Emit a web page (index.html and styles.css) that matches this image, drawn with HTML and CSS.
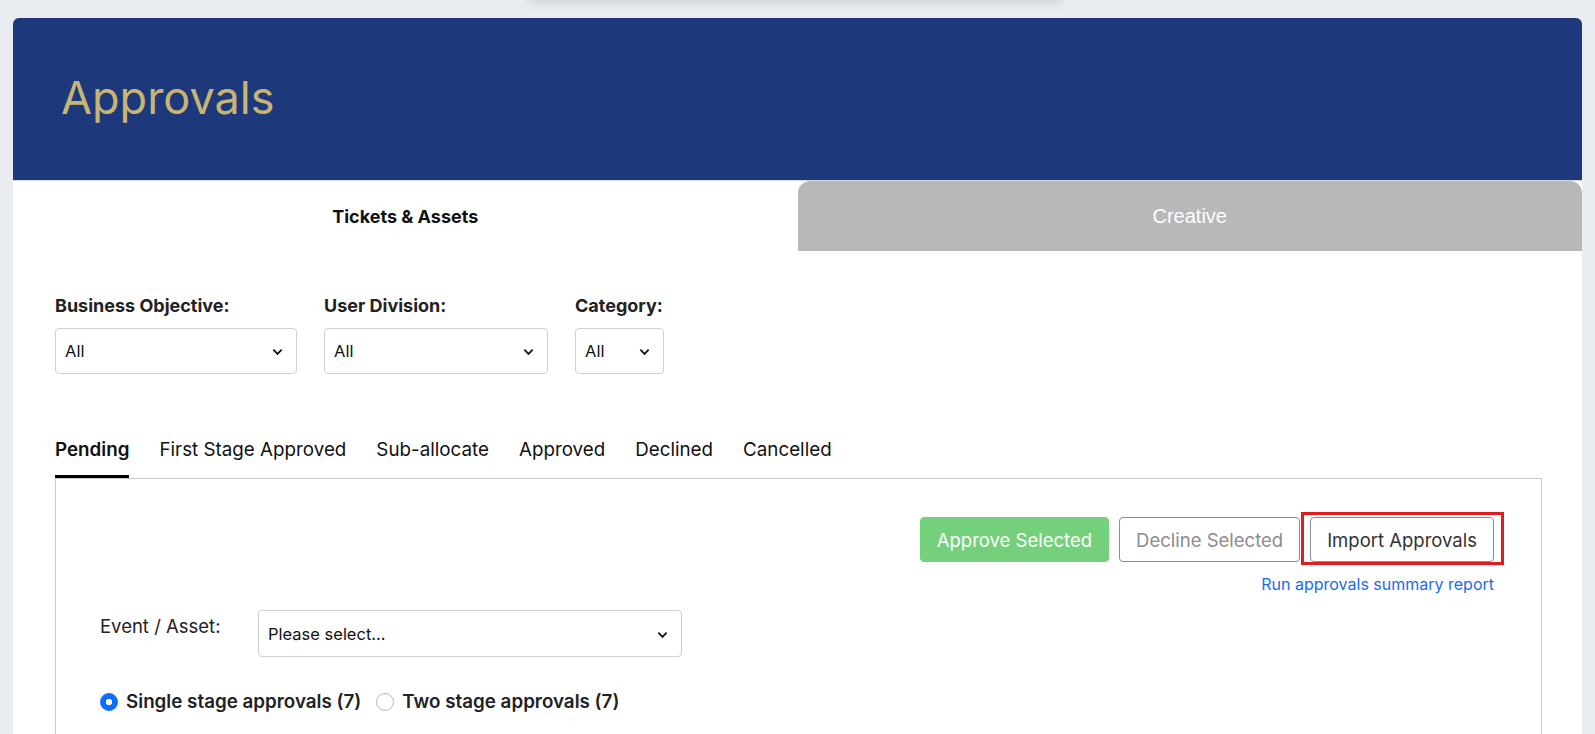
FILE: index.html
```html
<!DOCTYPE html>
<html lang="en">
<head>
    <meta charset="UTF-8">
    <meta name="viewport" content="width=device-width, initial-scale=1.0">
    <title>Approvals</title>
    <link rel="stylesheet" href="styles.css">
</head>
<body>
  <!-- floating bar just above the viewport, only its shadow shows -->
  <div class="top-shadow"></div>

  <div class="card">
    <header class="page-header">
      <h1>Approvals</h1>
    </header>

    <!-- Main tabs -->
    <nav class="main-tabs">
      <div class="main-tab active">Tickets &amp; Assets</div>
      <div class="main-tab">Creative</div>
    </nav>

    <div class="card-body">
      <!-- Filters -->
      <div class="filters">
        <div class="filter">
          <label>Business Objective:</label>
          <div class="select-wrap select-objective">
            <select><option>All</option></select>
            <svg class="chevron" viewBox="0 0 12 8"><path d="M1.5 1.5 6 6l4.5-4.5"/></svg>
          </div>
        </div>
        <div class="filter">
          <label>User Division:</label>
          <div class="select-wrap select-division">
            <select><option>All</option></select>
            <svg class="chevron" viewBox="0 0 12 8"><path d="M1.5 1.5 6 6l4.5-4.5"/></svg>
          </div>
        </div>
        <div class="filter">
          <label>Category:</label>
          <div class="select-wrap select-category">
            <select><option>All</option></select>
            <svg class="chevron" viewBox="0 0 12 8"><path d="M1.5 1.5 6 6l4.5-4.5"/></svg>
          </div>
        </div>
      </div>

      <!-- Status tabs -->
      <ul class="status-tabs">
        <li class="active">Pending</li>
        <li>First Stage Approved</li>
        <li>Sub-allocate</li>
        <li>Approved</li>
        <li>Declined</li>
        <li>Cancelled</li>
      </ul>

      <div class="panel">
        <div class="actions">
          <div class="buttons">
            <button class="btn btn-approve">Approve Selected</button>
            <button class="btn btn-decline">Decline Selected</button>
            <button class="btn btn-import">Import Approvals</button>
          </div>
          <a class="report-link" href="#">Run approvals summary report</a>
        </div>

        <div class="event-row">
          <label>Event / Asset:</label>
          <div class="select-wrap select-event">
            <select><option>Please select...</option></select>
            <svg class="chevron" viewBox="0 0 12 8"><path d="M1.5 1.5 6 6l4.5-4.5"/></svg>
          </div>
        </div>

        <div class="radios">
          <label class="radio"><span class="radio-dot checked"></span>Single stage approvals (7)</label>
          <label class="radio"><span class="radio-dot"></span>Two stage approvals (7)</label>
        </div>
      </div>
    </div>
  </div>
</body>
</html>
```

FILE: styles.css
```css
body {
    font-family: 'Inter', 'Noto Sans', sans-serif;
    background-color: #e9ecf1;
    margin: 0;
    color: #222;
}

.top-shadow {
    position: absolute;
    top: -40px;
    left: 530px;
    width: 530px;
    height: 40px;
    background-color: #e9ecf1;
    box-shadow: 0 2px 10px rgba(0, 0, 0, 0.14);
}

.card {
    margin: 18px 13px 0;
    background-color: #ffffff;
    border-radius: 6px 6px 0 0;
    min-height: 760px;
    overflow: hidden;
}

.page-header {
    height: 163px;
    box-sizing: border-box;
    background-color: #1d397b;
    border-bottom: 1px solid #d3d7df;
    padding: 0 0 3px 48px;
    display: flex;
    align-items: center;
}

.page-header h1 {
    margin: 0;
    font-size: 45px;
    font-weight: 400;
    color: #c9b573;
}

.main-tabs {
    display: flex;
    height: 70px;
}

.main-tab {
    flex: 1;
    display: flex;
    justify-content: center;
    align-items: center;
    font-size: 18px;
    font-weight: 700;
    color: #111;
}

.main-tab:not(.active) {
    background-color: #b8b8b8;
    color: #ffffff;
    font-family: 'Liberation Sans', Arial, sans-serif;
    font-size: 20px;
    font-weight: 400;
    border-radius: 12px 12px 0 0;
}

.card-body {
    padding: 43px 40px 0 42px;
}

.filters {
    display: flex;
    gap: 27px;
}

.filter label {
    display: block;
    font-size: 18px;
    font-weight: 700;
    line-height: 24px;
    margin-bottom: 10px;
    color: #222;
}

.select-wrap {
    position: relative;
}

.select-wrap select {
    appearance: none;
    -webkit-appearance: none;
    width: 100%;
    height: 46px;
    border: 1px solid #cfcfcf;
    border-radius: 4px;
    background-color: #fff;
    font-family: 'Inter', sans-serif;
    font-size: 16.5px;
    color: #111;
    padding: 0 30px 0 9px;
}

.chevron {
    position: absolute;
    right: 14px;
    top: 50%;
    width: 11px;
    height: 8px;
    margin-top: -3px;
    fill: none;
    stroke: #111;
    stroke-width: 2;
    pointer-events: none;
}

.select-objective { width: 242px; }
.select-division { width: 224px; }
.select-category { width: 89px; }
.select-event { width: 424px; }
.select-event select { height: 47px; }

.status-tabs {
    list-style: none;
    display: flex;
    gap: 30px;
    margin: 64px 0 0;
    padding: 0;
}

.status-tabs li {
    font-size: 18.8px;
    line-height: 24px;
    padding-bottom: 13px;
    border-bottom: 3px solid transparent;
    color: #111;
}

.status-tabs li.active {
    font-weight: 600;
    border-bottom-color: #000;
}

.panel {
    border: 1px solid #cccccc;
    border-bottom: none;
    padding: 38px 47px 0 44px;
    min-height: 260px;
}

.actions {
    display: flex;
    flex-direction: column;
    align-items: flex-end;
}

.buttons {
    display: flex;
    gap: 10px;
}

.btn {
    height: 45px;
    padding: 0 16px;
    font-family: 'Inter', sans-serif;
    font-size: 18.5px;
    border-radius: 4px;
    border: 1px solid #8c8c8c;
    background-color: #ffffff;
    cursor: pointer;
}

.btn-approve {
    background-color: #74d07a;
    border-color: #74d07a;
    color: #ffffff;
}

.btn-decline {
    color: #8c8c8c;
}

.btn-import {
    position: relative;
    color: #333;
}

/* red annotation box drawn over the screenshot */
.btn-import::after {
    content: '';
    position: absolute;
    top: -6px;
    bottom: -4px;
    left: -10px;
    right: -11px;
    border: 3px solid #e21c1c;
}

.report-link {
    margin-top: 12px;
    font-size: 16px;
    line-height: 20px;
    color: #1a6cf0;
    text-decoration: none;
}

.event-row {
    display: flex;
    margin-top: 16px;
}

.event-row label {
    width: 158px;
    font-size: 18.5px;
    padding-top: 5px;
    color: #222;
}

.radios {
    display: flex;
    align-items: center;
    margin-top: 33px;
    gap: 15px;
}

.radio {
    display: flex;
    align-items: center;
    gap: 8px;
    font-size: 18.8px;
    font-weight: 600;
    line-height: 24px;
    color: #222;
}

.radio-dot {
    width: 16px;
    height: 16px;
    border-radius: 50%;
    border: 1px solid #b9b9b9;
    background-color: #fff;
}

.radio-dot.checked {
    border-color: #0d6efd;
    background: radial-gradient(circle, #ffffff 0 3px, #0d6efd 3.5px);
}
```
